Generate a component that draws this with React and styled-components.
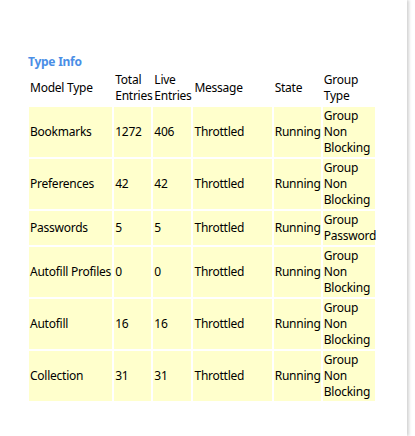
import styled, { createGlobalStyle } from "styled-components";

const GlobalStyle = createGlobalStyle`
  html, body {
    margin: 0;
    padding: 0;
    background: #ffffff;
  }
`;

const rows = [
  { model: "Bookmarks", total: "1272", live: "406", group: "Group Non Blocking" },
  { model: "Preferences", total: "42", live: "42", group: "Group Non Blocking" },
  { model: "Passwords", total: "5", live: "5", group: "Group Password" },
  { model: "Autofill Profiles", total: "0", live: "0", group: "Group Non Blocking" },
  { model: "Autofill", total: "16", live: "16", group: "Group Non Blocking" },
  { model: "Collection", total: "31", live: "31", group: "Group Non Blocking" },
];

const columns = [
  { key: "model", label: "Model Type", width: 81 },
  { key: "total", label: "Total Entries", width: 35 },
  { key: "live", label: "Live Entries", width: 36 },
  { key: "message", label: "Message", width: 76 },
  { key: "state", label: "State", width: 45 },
  { key: "group", label: "Group Type", width: 50 },
];

export default function App() {
  return (
    <>
      <GlobalStyle />
      <Panel>
        <Heading>Type Info</Heading>
        <Table>
          <colgroup>
            {columns.map((c) => (
              <col key={c.key} style={{ width: c.width + 2 }} />
            ))}
          </colgroup>
          <thead>
            <tr>
              {columns.map((c) => (
                <HeadCell key={c.key}>{c.label}</HeadCell>
              ))}
            </tr>
          </thead>
          <tbody>
            {rows.map((r) => (
              <tr key={r.model}>
                <Cell $nowrap>{r.model}</Cell>
                <Cell $nowrap>{r.total}</Cell>
                <Cell $nowrap>{r.live}</Cell>
                <Cell $nowrap>Throttled</Cell>
                <Cell $nowrap>Running</Cell>
                <Cell>{r.group}</Cell>
              </tr>
            ))}
          </tbody>
        </Table>
      </Panel>
    </>
  );
}

const Panel = styled.div`
  box-sizing: border-box;
  width: 407px;
  height: 436px;
  padding: 54px 0 0 27px;
  background: #ffffff;
  box-shadow: 2px 0 3px rgba(0, 0, 0, 0.18);
  font-family: "Noto Sans", "Open Sans", sans-serif;
  font-size: 12px;
  line-height: 16px;
  letter-spacing: -0.25px;
  color: #000000;
`;

const Heading = styled.h2`
  margin: 0 0 0 1px;
  font-size: 12px;
  line-height: 16px;
  font-weight: 700;
  color: rgb(74, 142, 230);
`;

const Table = styled.table`
  table-layout: fixed;
  border-collapse: separate;
  border-spacing: 2px;
  width: 350px;
  margin-top: -1px;
`;

const HeadCell = styled.th`
  padding: 1px;
  font-weight: 400;
  text-align: left;
  vertical-align: middle;
`;

const Cell = styled.td`
  padding: 1px;
  background: #ffffcc;
  vertical-align: middle;
  white-space: ${({ $nowrap }) => ($nowrap ? "nowrap" : "normal")};
`;
